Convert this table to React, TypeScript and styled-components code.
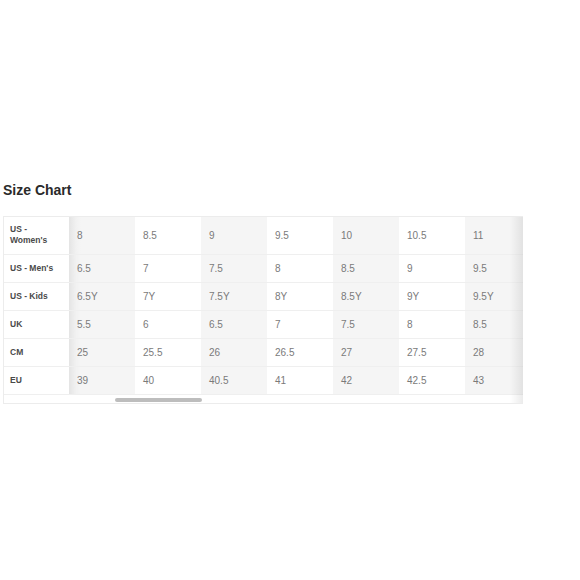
import React from "react";
import styled, { createGlobalStyle } from "styled-components";

const GlobalStyle = createGlobalStyle`
  html, body {
    margin: 0;
    padding: 0;
    background: #ffffff;
    font-family: "Liberation Sans", Arial, sans-serif;
  }
`;

const rows: { label: string[]; values: string[] }[] = [
  { label: ["US -", "Women's"], values: ["8", "8.5", "9", "9.5", "10", "10.5", "11"] },
  { label: ["US - Men's"], values: ["6.5", "7", "7.5", "8", "8.5", "9", "9.5"] },
  { label: ["US - Kids"], values: ["6.5Y", "7Y", "7.5Y", "8Y", "8.5Y", "9Y", "9.5Y"] },
  { label: ["UK"], values: ["5.5", "6", "6.5", "7", "7.5", "8", "8.5"] },
  { label: ["CM"], values: ["25", "25.5", "26", "26.5", "27", "27.5", "28"] },
  { label: ["EU"], values: ["39", "40", "40.5", "41", "42", "42.5", "43"] },
];

export default function App() {
  return (
    <>
      <GlobalStyle />
      <Page>
        <Title>Size Chart</Title>
        <Frame>
          <Table>
            <colgroup>
              <col style={{ width: 65 }} />
              {rows[0].values.map((_, j) => (
                <col key={j} style={{ width: 66 }} />
              ))}
            </colgroup>
            <tbody>
              {rows.map((row, i) => (
                <Row key={i} $tall={i === 0}>
                  <HeadCell>
                    {row.label.map((l) => (
                      <div key={l}>{l}</div>
                    ))}
                  </HeadCell>
                  {row.values.map((v, j) => (
                    <Cell key={j} $shade={j % 2 === 0} $first={j === 0}>
                      {v}
                    </Cell>
                  ))}
                </Row>
              ))}
            </tbody>
          </Table>
          <Track>
            <Thumb />
          </Track>
          <EdgeShadow />
        </Frame>
      </Page>
    </>
  );
}

const Page = styled.div`
  padding: 182px 0 0 3px;
`;

const Title = styled.h2`
  margin: 0 0 17px 0;
  font-size: 14px;
  line-height: 17px;
  font-weight: 700;
  color: #2a2a2a;
`;

const Frame = styled.div`
  position: relative;
  width: 520px;
  overflow: hidden;
  border-top: 1px solid #ececec;
  border-left: 1px solid #ececec;
  border-bottom: 1px solid #ececec;
  box-sizing: border-box;
`;

const Table = styled.table`
  border-collapse: collapse;
  table-layout: fixed;
  width: 527px;
`;

const Row = styled.tr<{ $tall: boolean }>`
  height: ${(p) => (p.$tall ? 37 : 28)}px;
  border-bottom: 1px solid #efefef;
`;

const HeadCell = styled.th`
  padding: 0 0 0 6px;
  text-align: left;
  vertical-align: middle;
  font-size: 8.5px;
  line-height: 11px;
  font-weight: 700;
  color: #4a4a4a;
  background: #fff;
`;

const Cell = styled.td<{ $shade: boolean; $first: boolean }>`
  padding: 0 0 0 8px;
  vertical-align: middle;
  font-size: 10px;
  color: #7a7a7a;
  background: ${(p) =>
    p.$first
      ? "linear-gradient(to right, #e4e4e4 0px, #f1f1f1 7px, #f5f5f5 12px)"
      : p.$shade
      ? "#f5f5f5"
      : "#fff"};
`;

const Track = styled.div`
  height: 8px;
  padding: 3px 0 0 111px;
  box-sizing: border-box;
`;

const Thumb = styled.div`
  width: 87px;
  height: 4px;
  border-radius: 2px;
  background: #bdbdbd;
`;

const EdgeShadow = styled.div`
  position: absolute;
  top: 0;
  right: 0;
  bottom: 0;
  width: 13px;
  background: linear-gradient(to right, rgba(0, 0, 0, 0), rgba(0, 0, 0, 0.08));
`;
